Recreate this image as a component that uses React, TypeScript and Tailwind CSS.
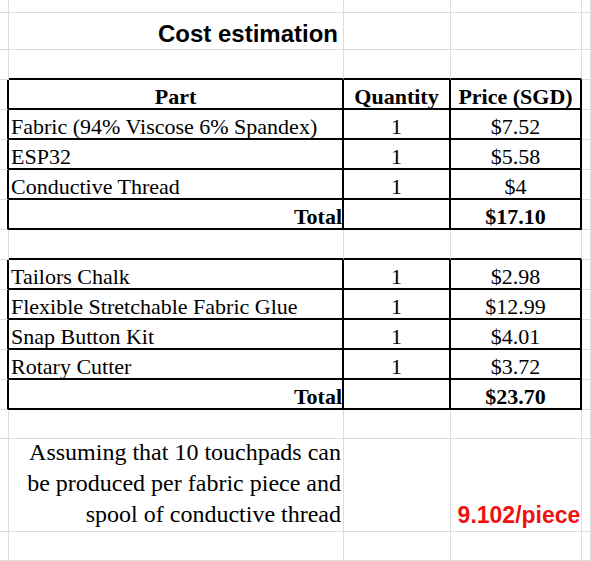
const GRID = "border-r border-b border-[#dcdcdc]";
const SERIF = "font-['Liberation_Serif','Times_New_Roman',serif] text-[22px] leading-[22px] text-black";

type Row = {
  h: string;
  kind: "plain" | "above" | "table";
  b?: React.ReactNode;
  c?: React.ReactNode;
  d?: React.ReactNode;
  bAlign?: string;
};

function Cells({ row }: { row: Row }) {
  const table = row.kind === "table";
  const above = row.kind === "above";
  const aCls = table ? "border-b border-b-[#dcdcdc] border-r-2 border-r-black" : GRID;
  const boxCls = table
    ? "border-r-2 border-b-2 border-black"
    : above
      ? "border-r border-r-[#dcdcdc] border-b-2 border-b-black"
      : GRID;
  return (
    <div className={`flex ${row.h}`}>
      <div className={`w-[9px] shrink-0 ${aCls}`} />
      <div className={`w-[335px] shrink-0 flex items-end ${row.bAlign ?? "justify-start pl-[2px]"} ${boxCls} ${SERIF}`}>
        {row.b}
      </div>
      <div className={`w-[107px] shrink-0 flex items-end justify-center ${boxCls} ${SERIF}`}>
        {row.c}
      </div>
      <div className={`w-[131px] shrink-0 flex items-end justify-center ${boxCls} ${SERIF}`}>
        {row.d}
      </div>
      <div className={`w-[9px] shrink-0 ${GRID}`} />
    </div>
  );
}

export default function App() {
  const rows: Row[] = [
    { h: "h-[13px]", kind: "plain" },
    {
      h: "h-[37px]",
      kind: "plain",
      bAlign: "justify-end pr-[5px]",
      b: (
        <span className="font-['Liberation_Sans',Arial,sans-serif] text-[24px] font-bold leading-none pb-[3px]">
          Cost estimation
        </span>
      ),
    },
    { h: "h-[30px]", kind: "above" },
    {
      h: "h-[30px]",
      kind: "table",
      bAlign: "justify-center",
      b: <b>Part</b>,
      c: <b>Quantity</b>,
      d: <b>Price (SGD)</b>,
    },
    { h: "h-[30px]", kind: "table", b: "Fabric (94% Viscose 6% Spandex)", c: "1", d: "$7.52" },
    { h: "h-[30px]", kind: "table", b: "ESP32", c: "1", d: "$5.58" },
    { h: "h-[30px]", kind: "table", b: "Conductive Thread", c: "1", d: "$4" },
    { h: "h-[30px]", kind: "table", bAlign: "justify-end pr-0", b: <b>Total</b>, d: <b>$17.10</b> },
    { h: "h-[30px]", kind: "above" },
    { h: "h-[30px]", kind: "table", b: "Tailors Chalk", c: "1", d: "$2.98" },
    { h: "h-[30px]", kind: "table", b: "Flexible Stretchable Fabric Glue", c: "1", d: "$12.99" },
    { h: "h-[30px]", kind: "table", b: "Snap Button Kit", c: "1", d: "$4.01" },
    { h: "h-[30px]", kind: "table", b: "Rotary Cutter", c: "1", d: "$3.72" },
    { h: "h-[30px]", kind: "table", bAlign: "justify-end pr-0", b: <b>Total</b>, d: <b>$23.70</b> },
    { h: "h-[29px]", kind: "plain" },
    {
      h: "h-[93px]",
      kind: "plain",
      bAlign: "justify-end pr-[2px]",
      b: (
        <span className="text-right text-[24px] leading-[31px] pb-[1px]">
          Assuming that 10 touchpads can
          <br />
          be produced per fabric piece and
          <br />
          spool of conductive thread
        </span>
      ),
      d: (
        <span className="font-['Liberation_Sans',Arial,sans-serif] text-[23px] font-bold text-[#ee1111] leading-none pb-[4px] pl-[6px] whitespace-nowrap">
          9.102/piece
        </span>
      ),
    },
    { h: "h-[29px]", kind: "plain" },
  ];

  return (
    <div className="w-[591px] h-[561px] overflow-hidden bg-white">
      {rows.map((row, i) => (
        <Cells key={i} row={row} />
      ))}
    </div>
  );
}
